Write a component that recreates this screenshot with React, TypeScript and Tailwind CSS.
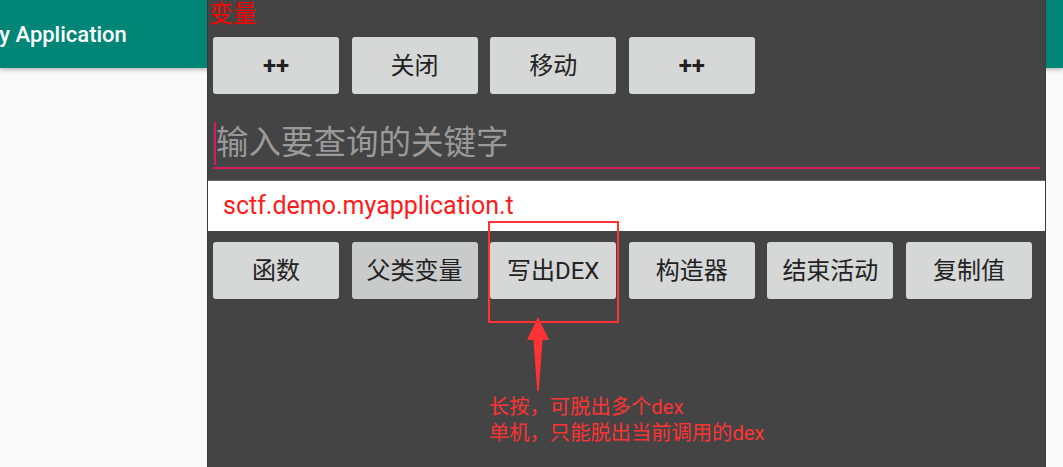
const row1 = ['++', '关闭', '移动', '++'];
const row2 = ['函数', '父类变量', '写出DEX', '构造器', '结束活动', '复制值'];

const cjk = "font-['Roboto','Noto_Sans_CJK_SC',sans-serif]";

function Btn({ label, pressed }: { label: string; pressed?: boolean }) {
  const bold = label === '++';
  return (
    <div
      className={`flex h-[57px] w-[126px] shrink-0 items-center justify-center rounded-[3px] text-[24px] text-[#222] ${cjk} ${
        bold ? 'font-bold' : 'font-normal'
      } ${pressed ? 'bg-[#c9caca]' : 'bg-[#d6d7d7]'}`}
    >
      {label}
    </div>
  );
}

export default function App() {
  return (
    <div className="relative h-[467px] w-[1063px] overflow-hidden bg-[#fafafa]">
      {/* app behind the floating window */}
      <div className="flex h-[68px] items-center bg-[#008577] shadow-[0_2px_4px_rgba(0,0,0,0.25)]">
        <span className="ml-[-20px] font-['Roboto',sans-serif] text-[22px] font-medium text-white">
          My Application
        </span>
      </div>

      {/* floating tool window */}
      <div className="absolute left-[207px] top-0 flex h-[467px] w-[839px] flex-col border-x border-[#3a3a3a] bg-[#444444]">
        <div className={`h-[24px] pl-[1px] pt-[2px] text-[24px] leading-[24px] text-[#ff0000] ${cjk}`}>变量</div>

        <div className="mt-[13px] flex gap-[12.6px] px-[5px]">
          {row1.map((l, i) => (
            <Btn key={i} label={l} />
          ))}
        </div>

        <div className="mx-[5px] mt-[22px] flex h-[53px] items-center border-b-2 border-[#d81b60] pt-[4px]">
          <div className="ml-[1px] h-[43px] w-[2px] bg-[#d81b60]" />
          <span className={`text-[32.5px] leading-none text-[#9a9a9a] ${cjk}`}>输入要查询的关键字</span>
        </div>

        <div className="mt-[11px] flex h-[51px] items-center border-t border-[#6a6a6a] bg-white pl-[15px]">
          <span className="font-['Roboto',sans-serif] text-[25px] text-[#ff1a1a]">sctf.demo.myapplication.t</span>
        </div>

        <div className="mt-[11px] flex gap-[12.6px] px-[5px]">
          {row2.map((l, i) => (
            <Btn key={i} label={l} pressed={i === 1} />
          ))}
        </div>
      </div>

      {/* annotation */}
      <div className="absolute left-[488px] top-[221px] h-[102px] w-[131px] border-2 border-[#ff3333]" />
      <svg className="absolute left-0 top-0" width="1063" height="467" viewBox="0 0 1063 467">
        <polygon
          points="538,317 549,340 542.5,340 538.8,391 537.2,391 533.5,340 527,340"
          fill="#ff3333"
        />
      </svg>
      <div className={`absolute left-[489px] top-[394px] text-[20.3px] leading-[26px] text-[#ff3333] ${cjk}`}>
        <div>长按，可脱出多个dex</div>
        <div>单机，只能脱出当前调用的dex</div>
      </div>
    </div>
  );
}
